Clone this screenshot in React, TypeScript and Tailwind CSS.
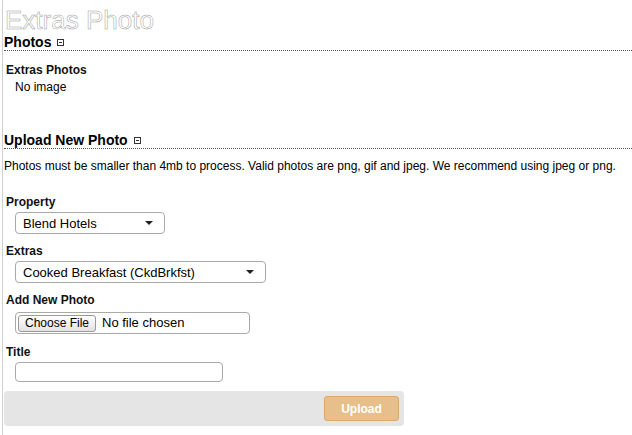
const font = { fontFamily: '"Liberation Sans", Arial, sans-serif' };

function ToggleIcon() {
  return (
    <span className="ml-[6px] inline-flex h-[7px] w-[7px] items-center justify-center border border-[#333]">
      <span className="h-px w-[3px] bg-[#333]" />
    </span>
  );
}

function SectionHeading({ title }: { title: string }) {
  return (
    <div className="flex h-[17px] items-center border-b border-dotted border-[#555] text-[14px] font-bold leading-[16px] text-black">
      <span>{title}</span>
      <ToggleIcon />
    </div>
  );
}

function Label({ children, className = '' }: { children: string; className?: string }) {
  return <div className={`pl-[2px] text-[12px] font-bold leading-[14px] text-[#111] ${className}`}>{children}</div>;
}

function FakeSelect({ value, width }: { value: string; width: string }) {
  return (
    <div
      className={`ml-[11px] flex h-[22px] items-center justify-between rounded-[4px] border border-[#a9a9a9] bg-white pl-[7px] pr-[11px] text-[13px] leading-none text-black ${width}`}
    >
      <span>{value}</span>
      <span className="h-0 w-0 border-x-[4px] border-t-[4px] border-x-transparent border-t-[#222]" />
    </div>
  );
}

export default function App() {
  return (
    <div className="min-h-screen bg-white" style={font}>
      <div className="ml-[2px] min-h-screen border-l border-[#cfcfcf] pl-[1px]">
        <h1 className="h-[34px] overflow-visible pl-[1px] pt-[8px] text-[26px] font-normal leading-[24px] text-white [-webkit-text-stroke:0.5px_#a0a0a0]">
          Extras Photo
        </h1>

        <SectionHeading title="Photos" />

        <div className="mt-[12px] pl-[2px] text-[12px] font-bold leading-[14px] text-[#111]">Extras Photos</div>
        <div className="mt-[3px] pl-[11px] text-[12px] leading-[14px] text-black">No image</div>

        <div className="mt-[38px]">
          <SectionHeading title="Upload New Photo" />
        </div>

        <p className="mt-[10px] text-[12px] leading-[14px] text-black">
          Photos must be smaller than 4mb to process. Valid photos are png, gif and jpeg. We recommend using jpeg or png.
        </p>

        <Label className="mt-[22px]">Property</Label>
        <div className="mt-[3px]">
          <FakeSelect value="Blend Hotels" width="w-[150px]" />
        </div>

        <Label className="mt-[10px]">Extras</Label>
        <div className="mt-[3px]">
          <FakeSelect value="Cooked Breakfast (CkdBrkfst)" width="w-[251px]" />
        </div>

        <Label className="mt-[10px]">Add New Photo</Label>
        <div className="ml-[11px] mt-[5px] flex h-[22px] w-[235px] items-center rounded-[4px] border border-[#a9a9a9] bg-white pl-[2px]">
          <span className="flex h-[17px] w-[78px] items-center justify-center rounded-[3px] border border-[#9a9a9a] bg-gradient-to-b from-white to-[#e2e2e2] text-[12px] text-black">
            Choose File
          </span>
          <span className="ml-[6px] text-[13px] text-black">No file chosen</span>
        </div>

        <Label className="mt-[11px]">Title</Label>
        <div className="ml-[11px] mt-[3px] h-[20px] w-[208px] rounded-[4px] border border-[#a9a9a9] bg-white" />

        <div className="mt-[9px] flex h-[35px] w-[400px] items-center justify-end rounded-[4px] bg-[#e5e5e5] pr-[5px]">
          <button className="flex h-[25px] w-[75px] items-center justify-center rounded-[3px] border border-[#d8aa6c] bg-[#e7bf8b] text-[12px] font-bold text-white">
            Upload
          </button>
        </div>
      </div>
    </div>
  );
}
